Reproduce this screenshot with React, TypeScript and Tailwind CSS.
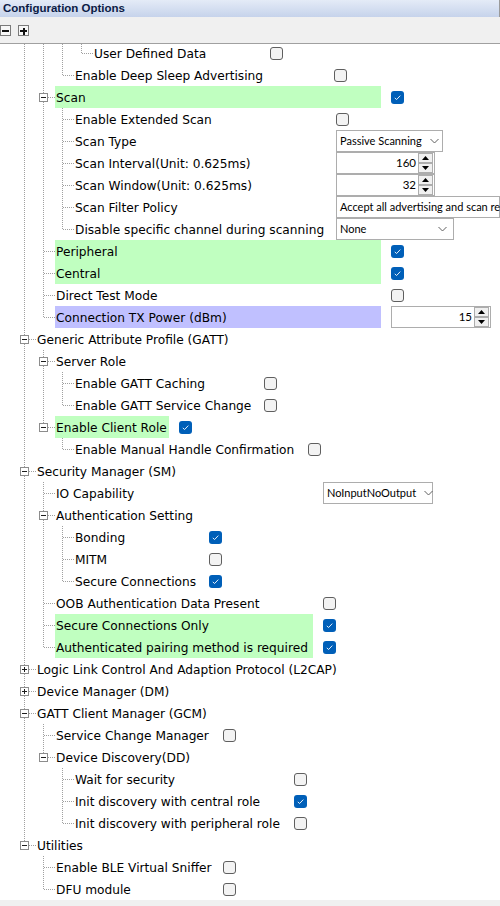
import clsx from "clsx";

type Ctl =
  | { t: "cb"; on?: boolean }
  | { t: "sel"; text: string; w: string }
  | { t: "spin"; val: string; w: string };

interface TreeNode {
  label: string;
  lw?: string;
  hl?: string;
  ctl?: Ctl;
  kids?: TreeNode[];
  closed?: boolean;
  hidden?: boolean;
}

interface FlatRow {
  n: TreeNode;
  cont: boolean[];
  last: boolean;
}

const GREEN = "bg-[#c0ffc0]";
const BLUE = "bg-[#c0c0ff]";
const cb = (on = false): Ctl => ({ t: "cb", on });

const tree: TreeNode[] = [
  {
    label: "Generic Access Profile (GAP)",
    hidden: true,
    kids: [
      {
        label: "Advertising",
        hidden: true,
        kids: [
          {
            label: "Advertising Data",
            hidden: true,
            kids: [{ label: "User Defined Data", lw: "w-[167px]", ctl: cb() }],
          },
          { label: "Enable Deep Sleep Advertising", lw: "w-[250px]", ctl: cb() },
        ],
      },
      {
        label: "Scan",
        lw: "w-[326px]",
        hl: GREEN,
        ctl: cb(true),
        kids: [
          { label: "Enable Extended Scan", lw: "w-[252px]", ctl: cb() },
          { label: "Scan Type", lw: "w-[252px]", ctl: { t: "sel", text: "Passive Scanning", w: "w-[107px]" } },
          { label: "Scan Interval(Unit: 0.625ms)", lw: "w-[252px]", ctl: { t: "spin", val: "160", w: "w-[99px]" } },
          { label: "Scan Window(Unit: 0.625ms)", lw: "w-[252px]", ctl: { t: "spin", val: "32", w: "w-[99px]" } },
          {
            label: "Scan Filter Policy",
            lw: "w-[252px]",
            ctl: { t: "sel", text: "Accept all advertising and scan re", w: "w-[164px]" },
          },
          { label: "Disable specific channel during scanning", lw: "w-[252px]", ctl: { t: "sel", text: "None", w: "w-[118px]" } },
        ],
      },
      { label: "Peripheral", lw: "w-[326px]", hl: GREEN, ctl: cb(true) },
      { label: "Central", lw: "w-[326px]", hl: GREEN, ctl: cb(true) },
      { label: "Direct Test Mode", lw: "w-[326px]", ctl: cb() },
      { label: "Connection TX Power (dBm)", lw: "w-[326px]", hl: BLUE, ctl: { t: "spin", val: "15", w: "w-[100px]" } },
    ],
  },
  {
    label: "Generic Attribute Profile (GATT)",
    kids: [
      {
        label: "Server Role",
        kids: [
          { label: "Enable GATT Caching", lw: "w-[180px]", ctl: cb() },
          { label: "Enable GATT Service Change", lw: "w-[180px]", ctl: cb() },
        ],
      },
      {
        label: "Enable Client Role",
        lw: "w-[114px]",
        hl: GREEN,
        ctl: cb(true),
        kids: [{ label: "Enable Manual Handle Confirmation", lw: "w-[224px]", ctl: cb() }],
      },
    ],
  },
  {
    label: "Security Manager (SM)",
    kids: [
      { label: "IO Capability", lw: "w-[258px]", ctl: { t: "sel", text: "NoInputNoOutput", w: "w-[110px]" } },
      {
        label: "Authentication Setting",
        kids: [
          { label: "Bonding", lw: "w-[125px]", ctl: cb(true) },
          { label: "MITM", lw: "w-[125px]", ctl: cb() },
          { label: "Secure Connections", lw: "w-[125px]", ctl: cb(true) },
        ],
      },
      { label: "OOB Authentication Data Present", lw: "w-[258px]", ctl: cb() },
      { label: "Secure Connections Only", lw: "w-[258px]", hl: GREEN, ctl: cb(true) },
      { label: "Authenticated pairing method is required", lw: "w-[258px]", hl: GREEN, ctl: cb(true) },
    ],
  },
  { label: "Logic Link Control And Adaption Protocol (L2CAP)", closed: true, kids: [] },
  { label: "Device Manager (DM)", closed: true, kids: [] },
  {
    label: "GATT Client Manager (GCM)",
    kids: [
      { label: "Service Change Manager", lw: "w-[158px]", ctl: cb() },
      {
        label: "Device Discovery(DD)",
        kids: [
          { label: "Wait for security", lw: "w-[210px]", ctl: cb() },
          { label: "Init discovery with central role", lw: "w-[210px]", ctl: cb(true) },
          { label: "Init discovery with peripheral role", lw: "w-[210px]", ctl: cb() },
        ],
      },
    ],
  },
  {
    label: "Utilities",
    kids: [
      { label: "Enable BLE Virtual Sniffer", lw: "w-[158px]", ctl: cb() },
      { label: "DFU module", lw: "w-[158px]", ctl: cb() },
    ],
  },
];

function flatten(nodes: TreeNode[], cont: boolean[], out: FlatRow[]) {
  nodes.forEach((n, i) => {
    const last = i === nodes.length - 1;
    if (!n.hidden) out.push({ n, cont, last });
    if (n.kids && !n.closed) flatten(n.kids, [...cont, !last], out);
  });
  return out;
}

const rows = flatten(tree, [], []);

function Guide({ on }: { on: boolean }) {
  return (
    <svg width="19" height="22" className="shrink-0" shapeRendering="crispEdges">
      {on && <line x1="10.5" y1="0" x2="10.5" y2="22" stroke="#a0a0a0" strokeDasharray="1 1" />}
    </svg>
  );
}

function Elbow({ last, box }: { last: boolean; box: "plus" | "minus" | null }) {
  return (
    <svg width="22" height="22" className="shrink-0" shapeRendering="crispEdges">
      <line x1="10.5" y1="0" x2="10.5" y2={last ? 12 : 22} stroke="#a0a0a0" strokeDasharray="1 1" />
      <line x1="11" y1="11.5" x2="22" y2="11.5" stroke="#a0a0a0" strokeDasharray="1 1" />
      {box && (
        <g>
          <rect x="6.5" y="7.5" width="8" height="8" fill="#fff" stroke="#8c8c8c" />
          <line x1="8" y1="11.5" x2="13" y2="11.5" stroke="#1e1e1e" />
          {box === "plus" && <line x1="10.5" y1="9" x2="10.5" y2="14" stroke="#1e1e1e" />}
        </g>
      )}
    </svg>
  );
}

function Check({ on }: { on?: boolean }) {
  if (on)
    return (
      <div className="flex h-[13px] w-[13px] items-center justify-center rounded-[3px] bg-[#005fb8]">
        <svg width="9" height="9" viewBox="0 0 9 9">
          <path d="M1.8 4.9 L3.6 6.5 L7.3 2.6" fill="none" stroke="#fff" strokeWidth="0.9" />
        </svg>
      </div>
    );
  return <div className="h-[13px] w-[13px] rounded-[3px] border border-[#5f5f5f] bg-[#f3f3f3]" />;
}

function Chevron() {
  return (
    <svg width="9" height="6" viewBox="0 0 9 6" className="shrink-0">
      <path d="M0.5 1 L4.5 5 L8.5 1" fill="none" stroke="#606060" strokeWidth="1" />
    </svg>
  );
}

function SpinBtn({ up }: { up?: boolean }) {
  return (
    <div className="flex h-[10px] w-[15px] items-center justify-center border border-[#adadad] bg-[#f0f0f0]">
      <svg width="7" height="4" viewBox="0 0 7 4">
        <path d={up ? "M0 4 L3.5 0 L7 4 Z" : "M0 0 L3.5 4 L7 0 Z"} fill="#000" />
      </svg>
    </div>
  );
}

function Control({ c }: { c: Ctl }) {
  if (c.t === "cb") return <Check on={c.on} />;
  if (c.t === "sel")
    return (
      <div
        className={clsx(
          "flex h-[22px] items-center justify-between gap-2 border border-[#adadad] bg-white pl-[3px] pr-[6px] font-['Lato',sans-serif] text-[11px] text-black",
          c.w
        )}
      >
        <span className="whitespace-nowrap">{c.text}</span>
        <Chevron />
      </div>
    );
  return (
    <div
      className={clsx(
        "flex h-[22px] items-center justify-end border border-[#adadad] bg-white pr-px font-['Lato',sans-serif] text-[11.5px] text-black",
        c.w
      )}
    >
      <span className="mr-[2px]">{c.val}</span>
      <div className="flex flex-col">
        <SpinBtn up />
        <SpinBtn />
      </div>
    </div>
  );
}

function Row({ r }: { r: FlatRow }) {
  const n = r.n;
  const box = n.kids ? (n.closed ? "plus" : "minus") : null;
  return (
    <div className="flex h-[22px] items-center">
      <div className="w-[14px] shrink-0" />
      {r.cont.map((c, j) => (
        <Guide key={j} on={c} />
      ))}
      <Elbow last={r.last} box={box} />
      <div className={clsx("flex h-[22px] shrink-0 items-center whitespace-nowrap pl-px pt-[2px]", n.lw, n.hl)}>
        {n.label}
      </div>
      {n.ctl && (
        <div className="ml-[10px] shrink-0">
          <Control c={n.ctl} />
        </div>
      )}
    </div>
  );
}

function ToolBox({ plus }: { plus?: boolean }) {
  return (
    <svg width="11" height="11" viewBox="0 0 11 11" shapeRendering="crispEdges">
      <rect x="0.5" y="0.5" width="10" height="10" fill="#f7f7f7" stroke="#7a7a7a" />
      <rect x="2" y="5" width="7" height="2" fill="#111" />
      {plus && <rect x="4.5" y="2.5" width="2" height="7" fill="#111" />}
    </svg>
  );
}

export default function App() {
  return (
    <div className="h-[906px] w-[500px] overflow-hidden bg-white font-['DejaVu_Sans',sans-serif] text-[12.2px] text-black">
      <div className="flex h-[17px] items-center border-r border-[#9a9a9a] bg-[linear-gradient(#e4ebf7,#c6d3eb)] pl-[3px] font-['Liberation_Sans',sans-serif] text-[11.5px] font-bold text-[#0b1b45]">
        Configuration Options
      </div>
      <div className="flex h-[27px] items-start gap-[7px] border-b border-[#a0a0a0] bg-[#f0f0f0] pt-[8px]">
        <ToolBox />
        <ToolBox plus />
      </div>
      <div className="h-[856px] overflow-hidden">
        <div className="-mt-[2px]">
          {rows.map((r, i) => (
            <Row key={i} r={r} />
          ))}
        </div>
      </div>
      <div className="h-[6px] bg-[#f0f0f0]" />
    </div>
  );
}
